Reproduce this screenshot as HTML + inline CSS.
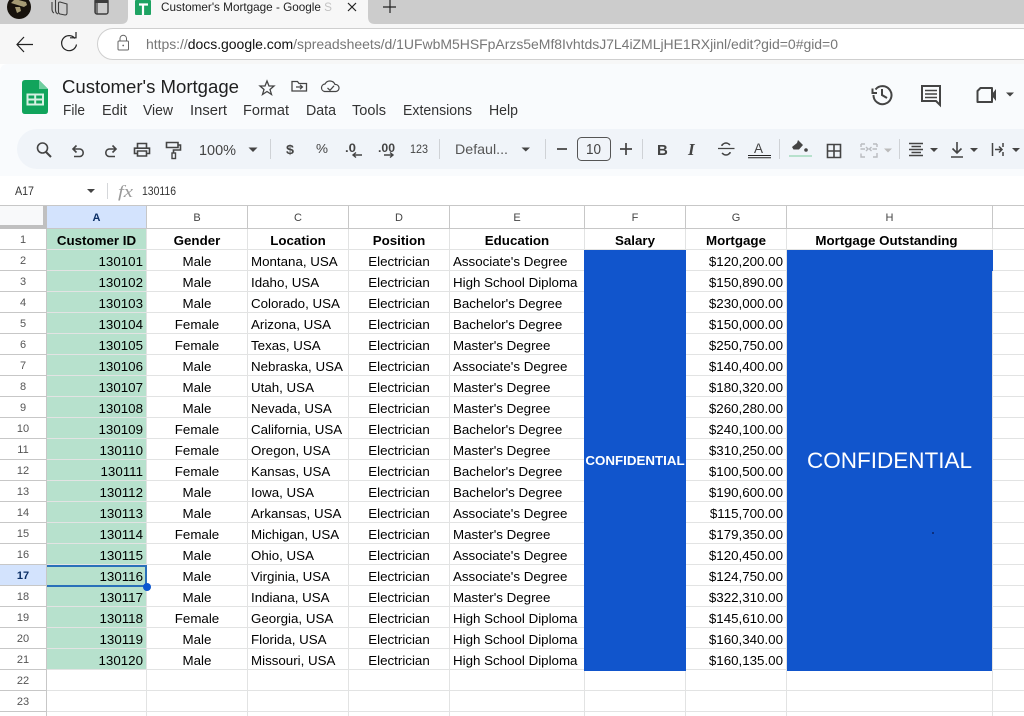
<!DOCTYPE html>
<html><head><meta charset="utf-8"><style>
html,body{margin:0;padding:0;width:1024px;height:716px;overflow:hidden;background:#fff;font-family:"Liberation Sans",Arial,sans-serif}
#w{position:absolute;left:0;top:0;width:1024px;height:716px;overflow:hidden}
#top{position:absolute;left:0;top:0}
#g{position:absolute;left:0;top:205px;border-collapse:separate;border-spacing:0;table-layout:fixed;width:1024px;font-size:13.33px;color:#000}
#g td{box-sizing:border-box;height:21px;padding:3px 3px 0;border-right:1px solid #e2e3e3;border-bottom:1px solid #e2e3e3;white-space:nowrap;overflow:hidden;font-weight:400;line-height:17px}
#g tr.h td{height:24px;padding:2px 0 0;line-height:20px;border-right:1px solid #c7c7c7;border-bottom:1px solid #c7c7c7;border-top:1px solid #c7c7c7;text-align:center;font-size:11px;color:#444;background:#fff}
#g td.r{background:#fff;border-right:1px solid #c7c7c7;border-bottom:1px solid #c7c7c7;text-align:center;font-size:11px;color:#555;padding:2px 0 0;line-height:18px}
#g td.a{background:#b7e1cd;text-align:right}
#g td.c{text-align:center}
#g td.m{text-align:right}
#g tr.t td:not(.r){font-weight:700;text-align:center}
#g td:last-child{border-right:0}
#g tr.h td:last-child{border-right:0}
.b{position:absolute;background:#1155cc;color:#fff;display:flex;align-items:center;justify-content:center;white-space:nowrap}
</style></head><body><div id="w">
<table id="g"><colgroup><col style="width:47px"><col style="width:100px"><col style="width:101px"><col style="width:101px"><col style="width:101px"><col style="width:135px"><col style="width:101px"><col style="width:101px"><col style="width:206px"><col></colgroup>
<tr class="h"><td style="background:#f8f9fa"></td><td style="background:#d3e3fd;color:#0b2f66;font-weight:700">A</td><td>B</td><td>C</td><td>D</td><td>E</td><td>F</td><td>G</td><td>H</td><td></td></tr>
<tr class="t"><td class="r">1</td><td class="a">Customer ID</td><td>Gender</td><td>Location</td><td>Position</td><td>Education</td><td>Salary</td><td>Mortgage</td><td style="padding-right:9px">Mortgage Outstanding</td><td></td></tr>
<tr><td class="r">2</td><td class="a">130101</td><td class="c">Male</td><td>Montana, USA</td><td class="c">Electrician</td><td>Associate's Degree</td><td></td><td class="m">$120,200.00</td><td></td><td></td></tr>
<tr><td class="r">3</td><td class="a">130102</td><td class="c">Male</td><td>Idaho, USA</td><td class="c">Electrician</td><td>High School Diploma</td><td></td><td class="m">$150,890.00</td><td></td><td></td></tr>
<tr><td class="r">4</td><td class="a">130103</td><td class="c">Male</td><td>Colorado, USA</td><td class="c">Electrician</td><td>Bachelor's Degree</td><td></td><td class="m">$230,000.00</td><td></td><td></td></tr>
<tr><td class="r">5</td><td class="a">130104</td><td class="c">Female</td><td>Arizona, USA</td><td class="c">Electrician</td><td>Bachelor's Degree</td><td></td><td class="m">$150,000.00</td><td></td><td></td></tr>
<tr><td class="r">6</td><td class="a">130105</td><td class="c">Female</td><td>Texas, USA</td><td class="c">Electrician</td><td>Master's Degree</td><td></td><td class="m">$250,750.00</td><td></td><td></td></tr>
<tr><td class="r">7</td><td class="a">130106</td><td class="c">Male</td><td>Nebraska, USA</td><td class="c">Electrician</td><td>Associate's Degree</td><td></td><td class="m">$140,400.00</td><td></td><td></td></tr>
<tr><td class="r">8</td><td class="a">130107</td><td class="c">Male</td><td>Utah, USA</td><td class="c">Electrician</td><td>Master's Degree</td><td></td><td class="m">$180,320.00</td><td></td><td></td></tr>
<tr><td class="r">9</td><td class="a">130108</td><td class="c">Male</td><td>Nevada, USA</td><td class="c">Electrician</td><td>Master's Degree</td><td></td><td class="m">$260,280.00</td><td></td><td></td></tr>
<tr><td class="r">10</td><td class="a">130109</td><td class="c">Female</td><td>California, USA</td><td class="c">Electrician</td><td>Bachelor's Degree</td><td></td><td class="m">$240,100.00</td><td></td><td></td></tr>
<tr><td class="r">11</td><td class="a">130110</td><td class="c">Female</td><td>Oregon, USA</td><td class="c">Electrician</td><td>Master's Degree</td><td></td><td class="m">$310,250.00</td><td></td><td></td></tr>
<tr><td class="r">12</td><td class="a">130111</td><td class="c">Female</td><td>Kansas, USA</td><td class="c">Electrician</td><td>Bachelor's Degree</td><td></td><td class="m">$100,500.00</td><td></td><td></td></tr>
<tr><td class="r">13</td><td class="a">130112</td><td class="c">Male</td><td>Iowa, USA</td><td class="c">Electrician</td><td>Bachelor's Degree</td><td></td><td class="m">$190,600.00</td><td></td><td></td></tr>
<tr><td class="r">14</td><td class="a">130113</td><td class="c">Male</td><td>Arkansas, USA</td><td class="c">Electrician</td><td>Associate's Degree</td><td></td><td class="m">$115,700.00</td><td></td><td></td></tr>
<tr><td class="r">15</td><td class="a">130114</td><td class="c">Female</td><td>Michigan, USA</td><td class="c">Electrician</td><td>Master's Degree</td><td></td><td class="m">$179,350.00</td><td></td><td></td></tr>
<tr><td class="r">16</td><td class="a">130115</td><td class="c">Male</td><td>Ohio, USA</td><td class="c">Electrician</td><td>Associate's Degree</td><td></td><td class="m">$120,450.00</td><td></td><td></td></tr>
<tr><td class="r" style="background:#d3e3fd;color:#0b2f66;font-weight:700">17</td><td class="a">130116</td><td class="c">Male</td><td>Virginia, USA</td><td class="c">Electrician</td><td>Associate's Degree</td><td></td><td class="m">$124,750.00</td><td></td><td></td></tr>
<tr><td class="r">18</td><td class="a">130117</td><td class="c">Male</td><td>Indiana, USA</td><td class="c">Electrician</td><td>Master's Degree</td><td></td><td class="m">$322,310.00</td><td></td><td></td></tr>
<tr><td class="r">19</td><td class="a">130118</td><td class="c">Female</td><td>Georgia, USA</td><td class="c">Electrician</td><td>High School Diploma</td><td></td><td class="m">$145,610.00</td><td></td><td></td></tr>
<tr><td class="r">20</td><td class="a">130119</td><td class="c">Male</td><td>Florida, USA</td><td class="c">Electrician</td><td>High School Diploma</td><td></td><td class="m">$160,340.00</td><td></td><td></td></tr>
<tr><td class="r">21</td><td class="a">130120</td><td class="c">Male</td><td>Missouri, USA</td><td class="c">Electrician</td><td>High School Diploma</td><td></td><td class="m">$160,135.00</td><td></td><td></td></tr>
<tr><td class="r">22</td><td></td><td></td><td></td><td></td><td></td><td></td><td></td><td></td><td></td></tr>
<tr><td class="r">23</td><td></td><td></td><td></td><td></td><td></td><td></td><td></td><td></td><td></td></tr>
<tr><td class="r"></td><td></td><td></td><td></td><td></td><td></td><td></td><td></td><td></td><td></td></tr>
</table>
<div class="b" style="left:584px;top:250px;width:102px;height:421px;font-size:13.33px;font-weight:700">CONFIDENTIAL</div>
<div class="b" style="left:787px;top:250px;width:205px;height:421px;font-size:22.5px">CONFIDENTIAL</div>
<div style="position:absolute;left:992px;top:250px;width:1px;height:21px;background:#1155cc"></div>
<div style="position:absolute;left:932px;top:532px;width:2px;height:2px;background:#0b2f80"></div>
<div style="position:absolute;left:43px;top:206px;width:4px;height:23px;background:#c0c0c0"></div>
<div style="position:absolute;left:0;top:225px;width:47px;height:4px;background:#c0c0c0"></div>
<div style="position:absolute;box-sizing:border-box;left:47px;top:565px;width:100px;height:22px;border:2px solid #2a70b9;border-left-width:0"></div>
<div style="position:absolute;left:143px;top:583px;width:8px;height:8px;border-radius:50%;background:#0b57d0"></div>

<svg id="top" width="1024" height="205" viewBox="0 0 1024 205" font-family="Liberation Sans, Arial, sans-serif">
<rect width="1024" height="205" fill="#fff"/>
<rect width="1024" height="24" fill="#cccccc"/>
<rect y="24" width="1024" height="40" fill="#f7f7f7"/>
<path d="M128 0H368V17Q368 24 375 24H121Q128 24 128 17Z" fill="#f7f7f7"/>
<circle cx="19" cy="7" r="12" fill="#17120c"/><path d="M11 3L24 7L27 5L26 2L15 -1ZM15 7L17 13L21 11L20 7Z" fill="#a59a74"/>
<g fill="none" stroke="#3c3c3c" stroke-width="1.100"><path d="M52 2V9Q52 12 54 13M55.500 0V10Q55.500 13 58 14"/><path d="M60 2L67 4V13Q67 15 65 15L60 14Q58.500 13.500 58.500 12V3Q58.500 2 60 2Z"/></g>
<rect x="95" y="-1" width="13" height="15" rx="2" fill="none" stroke="#3c3c3c" stroke-width="1.400"/><rect x="94.500" y="0" width="13.500" height="3" fill="#3c3c3c"/><rect x="95" y="3" width="3" height="10.500" fill="#3c3c3c" opacity=".6"/>
<rect x="135" y="0" width="16" height="15" rx="1" fill="#1ea362"/><path d="M139 4.500H148M143 4.500V15" stroke="#fff" stroke-width="2.200"/>
<text x="161" y="11" font-size="12" fill="#222" textLength="171" lengthAdjust="spacingAndGlyphs">Customer's Mortgage - Google S</text>
<rect x="322" y="0" width="14" height="16" fill="#f7f7f7" opacity=".75"/>
<path d="M348 3L356 11M356 3L348 11" stroke="#222" stroke-width="1.200"/>
<path d="M390 0V13M383 7H396" stroke="#222" stroke-width="1.200"/>
<path d="M33 44.500H17M24 37L17 44.500L24 52" fill="none" stroke="#222" stroke-width="1.200"/>
<path d="M75 38.500A7.500 7.500 0 1 0 76.500 44.500M70 37.800H76V32" fill="none" stroke="#222" stroke-width="1.200"/>
<rect x="97.500" y="28.500" width="940" height="31" rx="15.500" fill="#fff" stroke="#cfcfcf"/>
<rect x="118" y="41" width="10.500" height="9" rx="1" fill="none" stroke="#666"/><path d="M120 41V38.500A3.200 3.200 0 0 1 126.500 38.500V41" fill="none" stroke="#666"/><circle cx="123.200" cy="45.500" r=".9" fill="#666"/>
<text x="146" y="49" font-size="14" fill="#777" textLength="692" lengthAdjust="spacing">https://<tspan fill="#111">docs.google.com</tspan>/spreadsheets/d/1UFwbM5HSFpArzs5eMf8IvhtdsJ7L4iZMLjHE1RXjinl/edit?gid=0#gid=0</text>

<path d="M0 176V72Q0 64 8 64H1024V176Z" fill="#f9fbfd"/>
<path d="M25 80H39L48 89V111Q48 114 45 114H25Q22 114 22 111V83Q22 80 25 80Z" fill="#11a45c"/><path d="M39 80L48 89H39Z" fill="#6fce9f"/>
<path d="M27.500 94.500H43V104.500H27.500ZM35.200 94.500V104.500M27.500 99.500H43" fill="none" stroke="#d6f1e2" stroke-width="2"/>
<text x="62" y="93" font-size="18.500" fill="#1f1f1f" textLength="177" lengthAdjust="spacingAndGlyphs">Customer's Mortgage</text>
<path d="M267 81L269 86H274L270 89.500L271.500 94.500L267 91.500L262.500 94.500L264 89.500L260 86H265Z" fill="none" stroke="#444" stroke-width="1.300"/>
<path d="M292 81.500H297.500L299 83.500H306.500V91H292Z" fill="none" stroke="#444" stroke-width="1.300"/><path d="M296 87H302M300 84.800L302.500 87L300 89.200" fill="none" stroke="#444" stroke-width="1.200"/>
<path d="M327 91.500H324.500A3.800 3.800 0 0 1 325 84A5.500 5.500 0 0 1 335 84.500A3.500 3.500 0 0 1 336 91.500Z" fill="none" stroke="#444" stroke-width="1.200"/><path d="M327.500 88L330 90.300L334 85.800" fill="none" stroke="#444" stroke-width="1.200"/>
<g font-size="14.500" fill="#333">
<text x="63" y="115" textLength="22" lengthAdjust="spacingAndGlyphs">File</text><text x="102" y="115" textLength="25" lengthAdjust="spacingAndGlyphs">Edit</text><text x="143" y="115" textLength="30" lengthAdjust="spacingAndGlyphs">View</text><text x="190" y="115" textLength="37" lengthAdjust="spacingAndGlyphs">Insert</text><text x="243" y="115" textLength="46" lengthAdjust="spacingAndGlyphs">Format</text><text x="306" y="115" textLength="30" lengthAdjust="spacingAndGlyphs">Data</text><text x="352" y="115" textLength="34" lengthAdjust="spacingAndGlyphs">Tools</text><text x="403" y="115" textLength="69" lengthAdjust="spacingAndGlyphs">Extensions</text><text x="489" y="115" textLength="29" lengthAdjust="spacingAndGlyphs">Help</text></g>
<path d="M875.500 89.500A9 9 0 1 1 873.500 95M872.500 88.500V93H877M882 89V95L887 98" fill="none" stroke="#444" stroke-width="2"/>
<path d="M922 86H940V105L936 101H922Z" fill="none" stroke="#444" stroke-width="2"/><path d="M925 90.500H937M925 94H937M925 97.500H937" stroke="#444" stroke-width="1.500"/>
<path d="M980.500 88H992V102H977.500V91Z" fill="none" stroke="#444" stroke-width="2" stroke-linejoin="round"/><path d="M992 94L996 89V101L992 96Z" fill="#444"/><path d="M1006 92.500H1014L1010 96.500Z" fill="#444"/>

<rect x="17" y="129" width="1030" height="40" rx="20" fill="#f0f4f9"/>
<g fill="none" stroke="#444" stroke-width="1.600">
<circle cx="42.500" cy="148" r="5"/><path d="M46 152L51 157" stroke-width="2"/>
<path d="M74 156.500H80A3.800 3.800 0 0 0 80 149H73M76.500 145.500L73 149L76.500 152.500"/>
<path d="M115 156.500H109A3.800 3.800 0 0 1 109 149H116M112.500 145.500L116 149L112.500 152.500"/>
<path d="M137.500 148V143.500H146.500V148M137.500 153.500H134.500V148.200H149.500V153.500H146.500M137.500 151H146.500V156H137.500Z"/>
<path d="M166.500 142.500H178V147.500H166.500ZM178 145H180.500V150H173.500V153"/><rect x="172" y="153" width="3.500" height="5.500" stroke-width="1.400"/>
</g>
<text x="199" y="155" font-size="14.500" fill="#444" textLength="37" lengthAdjust="spacingAndGlyphs">100%</text>
<g fill="#444"><path d="M248.500 147.500H257.500L253 152Z"/><path d="M521.500 147.500H530L525.800 151.500Z"/><path d="M930 148H938L934 152Z"/><path d="M970 148H978L974 152Z"/><path d="M1012 148H1020L1016 152Z"/></g>
<path d="M884 148.500H892L888 152.500Z" fill="#bbb"/>
<g stroke="#cfd2d6"><path d="M270.500 139V159M439.500 139V159M545.500 139V159M642.500 139V159M779.500 139V159M899.500 139V159"/></g>
<text x="286" y="154" font-size="13" font-weight="700" fill="#444" textLength="8" lengthAdjust="spacingAndGlyphs">$</text>
<text x="316" y="153" font-size="12.500" fill="#444" textLength="12" lengthAdjust="spacingAndGlyphs">%</text>
<text x="345" y="152" font-size="12" fill="#444" font-weight="700" textLength="11" lengthAdjust="spacingAndGlyphs">.0</text>
<path d="M353 155H362M356 152.500L353 155L356 157.500" fill="none" stroke="#444" stroke-width="1.400"/>
<text x="378" y="152" font-size="12" fill="#444" font-weight="700" textLength="17" lengthAdjust="spacingAndGlyphs">.00</text>
<path d="M384 155H393M390 152.500L393 155L390 157.500" fill="none" stroke="#444" stroke-width="1.400"/>
<text x="410" y="153" font-size="12" fill="#444" textLength="18" lengthAdjust="spacingAndGlyphs">123</text>
<text x="455" y="154" font-size="14" fill="#555" textLength="53" lengthAdjust="spacingAndGlyphs">Defaul...</text>
<path d="M557 149H567M620 149H632M626 143V155" stroke="#444" stroke-width="1.700"/>
<rect x="577.500" y="137.500" width="33" height="23" rx="4" fill="none" stroke="#555"/>
<text x="586" y="154" font-size="14.500" fill="#444" textLength="15" lengthAdjust="spacingAndGlyphs">10</text>
<text x="657" y="155" font-size="15" font-weight="700" fill="#444">B</text>
<text x="688" y="155" font-size="17" font-style="italic" font-weight="700" font-family="Liberation Serif, serif" fill="#444">I</text>
<path d="M718 148.500H734.500" stroke="#444" stroke-width="1.300"/><path d="M722 146V145Q726 141 730 145M730 152V153Q726 157 722 153" fill="none" stroke="#444" stroke-width="1.500"/>
<text x="754" y="153" font-size="13.500" fill="#444">A</text>
<path d="M748 155.500H771M748 157.800H771" stroke="#222" stroke-width="1"/>
<path d="M798 140L803 145L799 149.500L793.500 149.500L792 147L797 143" fill="#444"/><circle cx="806" cy="150" r="1.800" fill="#444"/>
<rect x="789" y="155" width="23" height="2" fill="#b7e1cd"/>
<path d="M827.500 144.500H840.500V157.500H827.500ZM834 144.500V157.500M827.500 151H840.500" fill="none" stroke="#444" stroke-width="1.600"/>
<path d="M860.500 149H865M861 144H865M861 153.500V157H865M877 144H873M877 149H872.500M873 157H877V153M861 144V147M877 144V147M866 147L868 149L866 151M871.500 147L869.500 149L871.500 151" fill="none" stroke="#b9bcc0" stroke-width="1.400"/>
<path d="M909 143.500H923M911.500 146.500H921M909 149.500H923M911.500 152.500H921M909 155.500H923" stroke="#444" stroke-width="1.500"/>
<path d="M957 142V152M952.500 148.500L957 153L961.500 148.500M951 157H963" fill="none" stroke="#444" stroke-width="1.600"/>
<path d="M992.500 143V156M1003 143V147M1003 152V156M995 149.500H1002M999 146.500L1002 149.500L999 152.500" fill="none" stroke="#444" stroke-width="1.500"/>

<text x="15" y="195" font-size="12" fill="#333" textLength="19" lengthAdjust="spacingAndGlyphs">A17</text>
<path d="M87 189H95L91 193Z" fill="#444"/>
<path d="M107.500 183V199" stroke="#d5d7da"/>
<text x="118" y="197" font-size="17" font-style="italic" font-family="Liberation Serif, serif" fill="#999" textLength="15" lengthAdjust="spacingAndGlyphs">fx</text>
<text x="142" y="195" font-size="12" fill="#333" textLength="34" lengthAdjust="spacingAndGlyphs">130116</text>
</svg>
</div></body></html>
